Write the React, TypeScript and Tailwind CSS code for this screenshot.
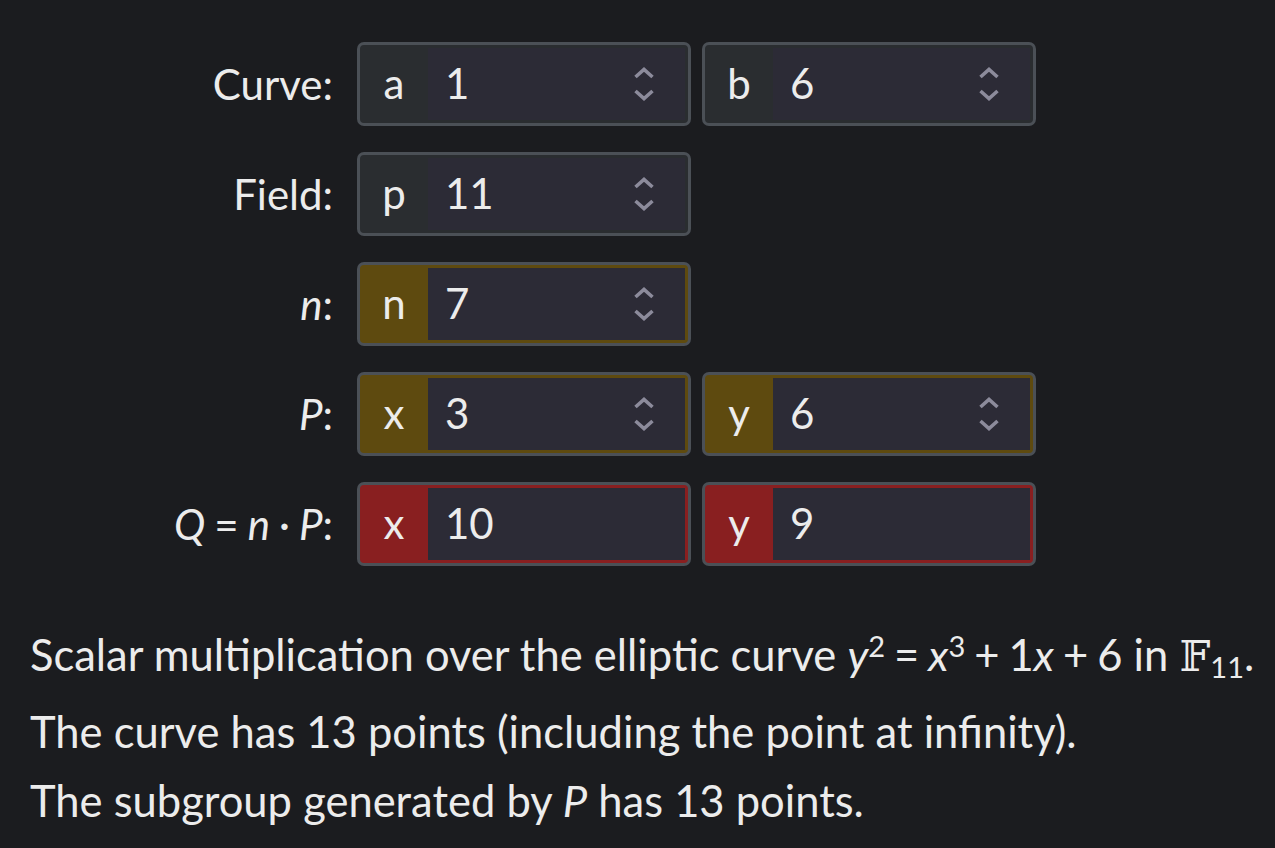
import React from "react";

type Tone = "plain" | "gold" | "red";

const toneBg: Record<Tone, string> = {
  plain: "bg-[#2a2d30]",
  gold: "bg-[#5e4a0f]",
  red: "bg-[#891f20]",
};

function Chevrons() {
  return (
    <svg width="22" height="36" viewBox="0 0 22 36" className="shrink-0" fill="none">
      <path d="M2.5 11 L11 3.5 L19.5 11" stroke="#8c8b9b" strokeWidth="3.6" />
      <path d="M2.5 25 L11 32.5 L19.5 25" stroke="#8c8b9b" strokeWidth="3.6" />
    </svg>
  );
}

function NumBox({ prefix, value, tone = "plain", spin = true }: { prefix: string; value: string; tone?: Tone; spin?: boolean }) {
  return (
    <div className={`flex h-[84px] w-[334px] overflow-hidden rounded-[7px] border-[3px] border-[#4b5056] ${toneBg[tone]}`}>
      <div className="flex w-[68px] shrink-0 items-center justify-center pb-[2px]">{prefix}</div>
      <div className="my-[3px] mr-[3px] flex flex-1 items-center bg-[#2c2b36] pl-[17px] pr-[30px]">
        <span className="flex-1 pb-[2px]">{value}</span>
        {spin && <Chevrons />}
      </div>
    </div>
  );
}

function Row({ label, children }: { label: React.ReactNode; children: React.ReactNode }) {
  return (
    <div className="flex items-center">
      <div className="w-[357px] shrink-0 pr-[24px] text-right">{label}</div>
      <div className="flex gap-[11px]">{children}</div>
    </div>
  );
}

export default function App() {
  return (
    <div className="min-h-screen bg-[#1b1c1f] font-['Lato','Noto_Sans',sans-serif] text-[42px] leading-none text-[#ececec]">
      <div className="flex flex-col gap-[26px] pt-[42px]">
        <Row label="Curve:">
          <NumBox prefix="a" value="1" />
          <NumBox prefix="b" value="6" />
        </Row>
        <Row label="Field:">
          <NumBox prefix="p" value="11" />
        </Row>
        <Row label={<><i>n</i>:</>}>
          <NumBox prefix="n" value="7" tone="gold" />
        </Row>
        <Row label={<><i>P</i>:</>}>
          <NumBox prefix="x" value="3" tone="gold" />
          <NumBox prefix="y" value="6" tone="gold" />
        </Row>
        <Row
          label={
            <>
              <i>Q</i>
              <span className="mx-[9px]">=</span>
              <i>n</i>
              <span className="mx-[9px]">·</span>
              <i>P</i>:
            </>
          }
        >
          <NumBox prefix="x" value="10" tone="red" spin={false} />
          <NumBox prefix="y" value="9" tone="red" spin={false} />
        </Row>
      </div>

      <div className="pl-[30px] pt-[66px] text-[43.5px]">
        <p className="leading-[44px]">
          Scalar multiplication over the elliptic curve <i>y</i>
          <sup className="text-[29px]">2</sup>
          <span className="mx-[9px]">=</span>
          <i>x</i>
          <sup className="text-[29px]">3</sup>
          <span className="mx-[9px]">+</span>1<i>x</i>
          <span className="mx-[9px]">+</span>6 in{" "}
          <span className="font-['DejaVu_Serif',serif]">𝔽</span>
          <sub className="text-[29px]">11</sub>.
        </p>
        <p className="mt-[31px] leading-[44px]">The curve has 13 points (including the point at infinity).</p>
        <p className="mt-[25px] leading-[44px]">
          The subgroup generated by <i>P</i> has 13 points.
        </p>
      </div>
    </div>
  );
}
